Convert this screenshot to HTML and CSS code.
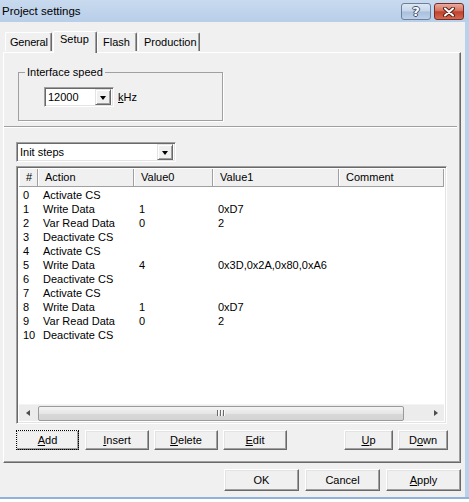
FILE: index.html
```html
<!DOCTYPE html>
<html>
<head>
    <title>Project settings</title>
    <link rel="stylesheet" href="styles.css">
</head>
<body>
<div class="window">
    <!-- Caption bar with help and close buttons -->
    <div class="titlebar">
        <span class="title">Project settings</span>
        <div class="caption-buttons">
            <span class="cap-btn help">?</span>
            <span class="cap-btn close">
                <svg width="14" height="10" viewBox="0 0 14 10">
                    <path d="M3 1.5 L11 8.5 M11 1.5 L3 8.5" stroke="#5a2018" stroke-width="4" stroke-linecap="round"/>
                    <path d="M3 1.5 L11 8.5 M11 1.5 L3 8.5" stroke="#fff" stroke-width="2" stroke-linecap="round"/>
                </svg>
            </span>
        </div>
    </div>

    <div class="client">
        <div class="tabs">
            <span class="tab general">General</span>
            <span class="tab active">Setup</span>
            <span class="tab flash">Flash</span>
            <span class="tab production">Production</span>
        </div>

        <div class="panel">
            <fieldset class="group">
                <legend>Interface speed</legend>
                <div class="speed-row">
                    <div class="combo speed">
                        <span class="combo-text">12000</span>
                        <span class="combo-arrow"><i></i></span>
                    </div>
                    <span><u>k</u>Hz</span>
                </div>
            </fieldset>

            <div class="separator"></div>

            <div class="combo steps">
                <span class="combo-text">Init steps</span>
                <span class="combo-arrow"><i></i></span>
            </div>

            <!-- Step list -->
            <div class="list">
                <div class="list-header row">
                    <span>#</span>
                    <span>Action</span>
                    <span>Value0</span>
                    <span>Value1</span>
                    <span>Comment</span>
                </div>
                <div class="list-rows">
                    <div class="row"><span>0</span><span>Activate CS</span><span></span><span></span><span></span></div>
                    <div class="row"><span>1</span><span>Write Data</span><span>1</span><span>0xD7</span><span></span></div>
                    <div class="row"><span>2</span><span>Var Read Data</span><span>0</span><span>2</span><span></span></div>
                    <div class="row"><span>3</span><span>Deactivate CS</span><span></span><span></span><span></span></div>
                    <div class="row"><span>4</span><span>Activate CS</span><span></span><span></span><span></span></div>
                    <div class="row"><span>5</span><span>Write Data</span><span>4</span><span>0x3D,0x2A,0x80,0xA6</span><span></span></div>
                    <div class="row"><span>6</span><span>Deactivate CS</span><span></span><span></span><span></span></div>
                    <div class="row"><span>7</span><span>Activate CS</span><span></span><span></span><span></span></div>
                    <div class="row"><span>8</span><span>Write Data</span><span>1</span><span>0xD7</span><span></span></div>
                    <div class="row"><span>9</span><span>Var Read Data</span><span>0</span><span>2</span><span></span></div>
                    <div class="row"><span>10</span><span>Deactivate CS</span><span></span><span></span><span></span></div>
                </div>
                <div class="hscroll">
                    <span class="sb-arrow left"></span>
                    <span class="sb-thumb"><b></b><b></b><b></b></span>
                    <span class="sb-track"></span>
                    <span class="sb-arrow right"></span>
                </div>
            </div>

            <div class="list-buttons">
                <span class="btn add"><u>A</u>dd</span>
                <span class="btn"><u>I</u>nsert</span>
                <span class="btn"><u>D</u>elete</span>
                <span class="btn"><u>E</u>dit</span>
                <span class="btn up"><u>U</u>p</span>
                <span class="btn down">D<u>o</u>wn</span>
            </div>
        </div>

        <div class="dialog-buttons">
            <span class="btn big">OK</span>
            <span class="btn big">Cancel</span>
            <span class="btn big"><u>A</u>pply</span>
        </div>
    </div>
</div>
</body>
</html>
```

FILE: styles.css
```css
/* Classic dialog look: grey client, blue frame */
body {
    margin: 0;
    background-color: #fff;
    font-family: 'Liberation Sans', Arial, sans-serif;
    font-size: 11px;
    color: #000;
}
.window {
    width: 469px;
    height: 499px;
    box-sizing: border-box;
    border-bottom: 2px solid #8fb4dc;
    display: flex;
    flex-direction: column;
}
.titlebar {
    height: 22px;
    flex: none;
    display: flex;
    justify-content: space-between;
    align-items: flex-start;
    padding: 3px 5px 0 2px;
    box-sizing: border-box;
    background: linear-gradient(#c8daee, #b8cfe9);
}
.title {
    font-size: 11.5px;
    line-height: 17px;
}
.caption-buttons {
    display: flex;
    gap: 3px;
}
.cap-btn {
    width: 30px;
    height: 17px;
    box-sizing: border-box;
    border-radius: 3px;
    display: flex;
    align-items: center;
    justify-content: center;
}
.help {
    border: 1px solid #6d7f99;
    background: linear-gradient(#dce7f4 0%, #c6d6ea 48%, #a8bfdc 52%, #bdd1e9 100%);
    color: #fff;
    font-weight: bold;
    font-size: 13px;
    font-family: 'DejaVu Sans', sans-serif;
    text-shadow: 1px 0 #3d4d66, -1px 0 #3d4d66, 0 1px #3d4d66, 0 -1px #3d4d66;
}
.close {
    border: 1px solid #7b2c22;
    background: linear-gradient(#e9ac9f 0%, #d5735f 45%, #c1412b 52%, #d16a52 100%);
}

.client {
    flex: 1;
    background-color: #f0f0f0;
    border-right: 4px solid #b9d1ea;
    display: flex;
    flex-direction: column;
}

/* Tabs */
.tabs {
    display: flex;
    align-items: flex-end;
    height: 22px;
    margin-top: 8px;
    padding-left: 5px;
    position: relative;
    z-index: 1;
}
.tab {
    height: 19px;
    box-sizing: border-box;
    border-top: 1px solid #fff;
    border-left: 1px solid #fff;
    border-right: 1px solid #696969;
    border-radius: 2px 2px 0 0;
    box-shadow: inset -1px 0 0 #a0a0a0;
    padding: 3px 0 0 5px;
    margin-bottom: 1px;
    white-space: nowrap;
}
.general {
    width: 47px;
    padding-left: 4px;
    letter-spacing: -0.2px;
}
.tab.active {
    width: 44px;
    height: 22px;
    margin-left: 1px;
    margin-bottom: -1px;
    padding-top: 1px;
    padding-left: 6px;
    background-color: #f0f0f0;
}
.flash { width: 40px; }
.production { width: 62px; margin-left: 1px; }

.panel {
    width: 458px;
    height: 411px;
    margin-left: 3px;
    box-sizing: border-box;
    border-top: 1px solid #fff;
    border-left: 1px solid #fff;
    border-right: 1px solid #696969;
    border-bottom: 1px solid #696969;
    box-shadow: inset -1px -1px 0 #a0a0a0;
    display: flex;
    flex-direction: column;
}

/* Interface speed group */
.group {
    width: 205px;
    height: 55px;
    box-sizing: border-box;
    margin: 13px 0 0 14px;
    padding: 8px 6px 0 6px;
    border: 1px solid #a0a0a0;
    box-shadow: 1px 1px 0 #fff;
}
.group legend {
    padding: 0 2px;
    line-height: 13px;
}
.speed-row {
    display: flex;
    align-items: center;
    gap: 4px;
    margin-left: 19px;
}

/* Combo boxes */
.combo {
    height: 20px;
    box-sizing: border-box;
    border: 1px solid;
    border-color: #a0a0a0 #fff #fff #a0a0a0;
    box-shadow: inset 1px 1px 0 #696969, inset -1px -1px 0 #e3e3e3;
    background-color: #fff;
    display: flex;
    align-items: center;
    justify-content: space-between;
    padding: 1px 2px 1px 3px;
}
.speed { width: 70px; }
.steps {
    width: 160px;
    margin: 14px 0 0 12px;
}
.combo-arrow {
    width: 16px;
    height: 16px;
    box-sizing: border-box;
    border: 1px solid;
    border-color: #e3e3e3 #696969 #696969 #e3e3e3;
    box-shadow: inset 1px 1px 0 #fff, inset -1px -1px 0 #a0a0a0;
    background-color: #f0f0f0;
    display: flex;
    align-items: center;
    justify-content: center;
}
.combo-arrow i {
    width: 0;
    height: 0;
    border-left: 3.5px solid transparent;
    border-right: 3.5px solid transparent;
    border-top: 4px solid #000;
    margin-top: 1px;
}

.separator {
    height: 0;
    margin: 5px 3px 0 0;
    border-top: 1px solid #a0a0a0;
    border-bottom: 1px solid #fff;
}

/* Step list */
.list {
    width: 431px;
    height: 258px;
    margin: 4px 0 0 12px;
    box-sizing: border-box;
    border: 1px solid;
    border-color: #a0a0a0 #fff #fff #a0a0a0;
    box-shadow: inset 1px 1px 0 #696969, inset -1px -1px 0 #e3e3e3;
    background-color: #fff;
    padding: 2px 2px 2px 2px;
    display: flex;
    flex-direction: column;
}
.row {
    display: grid;
    grid-template-columns: 19px 96px 79px 126px 1fr;
    height: 14px;
    line-height: 14px;
}
.row span {
    padding-left: 5px;
    white-space: nowrap;
}
.row span:first-child {
    padding-left: 4px;
}
.list-header {
    height: 18px;
    line-height: 17px;
    background-color: #f0f0f0;
    border-bottom: 1px solid #a0a0a0;
    box-sizing: border-box;
    margin-bottom: 1px;
}
.list-header span {
    padding-left: 6px;
    border-left: 1px solid #fff;
    border-right: 1px solid #a0a0a0;
}
.list-header span:first-child {
    padding-left: 6px;
}
.list-rows {
    flex: 1;
}

/* Horizontal scroll bar */
.hscroll {
    height: 17px;
    flex: none;
    display: flex;
    align-items: center;
    background-color: #ececec;
    border-top: 1px solid #f4f4f4;
    box-sizing: border-box;
}
.sb-arrow {
    width: 17px;
    height: 15px;
    display: flex;
    align-items: center;
    justify-content: center;
}
.sb-arrow::after {
    content: '';
    width: 0;
    height: 0;
    border-top: 3.5px solid transparent;
    border-bottom: 3.5px solid transparent;
}
.left::after { border-right: 4px solid #4d4d4d; }
.right::after { border-left: 4px solid #4d4d4d; }
.sb-thumb {
    width: 366px;
    height: 15px;
    margin-left: 2px;
    box-sizing: border-box;
    border: 1px solid #9a9a9a;
    border-radius: 2px;
    background: linear-gradient(#f4f4f4, #e6e6e6 50%, #d8d8d8 51%, #d4d4d4);
    display: flex;
    align-items: center;
    justify-content: center;
    gap: 1px;
}
.sb-thumb b {
    width: 1px;
    height: 6px;
    background-color: #6a6a6a;
    border-right: 1px solid #fafafa;
}
.sb-track {
    flex: 1;
}

/* Buttons */
.btn {
    height: 20px;
    box-sizing: border-box;
    border: 1px solid;
    border-color: #fff #696969 #696969 #fff;
    box-shadow: inset -1px -1px 0 #a0a0a0, inset 1px 1px 0 #e3e3e3;
    background-color: #f0f0f0;
    display: flex;
    align-items: center;
    justify-content: center;
    width: 64px;
}
.list-buttons {
    display: flex;
    gap: 5px;
    width: 432px;
    margin: 6px 0 0 12px;
}
.add {
    width: 63px;
    margin-right: 1px;
    outline: 1px dotted #000;
    outline-offset: -1px;
}
.up {
    width: 49px;
    margin-left: auto;
}
.down { width: 50px; }

.dialog-buttons {
    display: flex;
    justify-content: flex-end;
    gap: 6px;
    margin: 6px 4px 0 0;
}
.btn.big {
    width: 75px;
    height: 22px;
}
```
